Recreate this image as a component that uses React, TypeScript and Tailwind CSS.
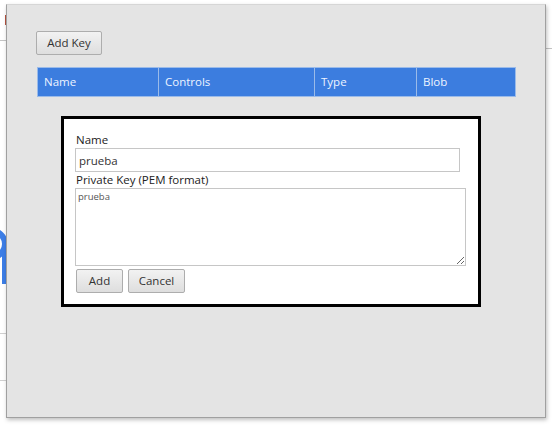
import React from "react";

const font = { fontFamily: '"Open Sans", "Noto Sans", Arial, sans-serif' };

function GreyButton({ label, className = "" }: { label: string; className?: string }) {
  return (
    <button
      type="button"
      className={`flex items-center justify-center border border-[#adadad] rounded-[2px] bg-gradient-to-b from-[#f2f2f2] to-[#dedede] text-[11.5px] text-[#333] leading-none ${className}`}
    >
      {label}
    </button>
  );
}

const columns = [
  { name: "Name", width: "w-[121px]" },
  { name: "Controls", width: "w-[156px]" },
  { name: "Type", width: "w-[102px]" },
  { name: "Blob", width: "flex-1" },
];

export default function App() {
  return (
    <div className="relative w-[552px] h-[426px] overflow-hidden bg-white" style={font}>
      {/* page behind the overlay */}
      <div className="absolute left-0 top-[40px] w-[7px] h-px bg-[#c4c4c4]" />
      <div className="absolute left-0 top-[333px] w-[7px] h-px bg-[#d0d0d0]" />
      <div className="absolute left-0 top-[380px] w-[7px] h-px bg-[#d0d0d0]" />
      <div className="absolute right-0 top-[48px] w-[8px] h-px bg-[#c4c4c4]" />
      <div className="absolute left-[5px] top-[15px] w-[2px] h-[10px] bg-[#b5523f]" />
      <svg className="absolute left-0 top-[226px]" width="8" height="60" viewBox="0 0 8 60">
        <circle cx="-8" cy="18" r="13" fill="none" stroke="#3d7ee6" strokeWidth="6" />
        <rect x="2" y="18" width="6" height="40" fill="#3d7ee6" />
      </svg>

      {/* overlay panel */}
      <div className="absolute left-[6px] top-[4px] w-[540px] h-[414px] bg-[#e4e4e4] border border-[#a0a0a0] border-t-[#d6d6d6] shadow-[1px_2px_4px_rgba(0,0,0,0.25)] pl-[29px] pt-[26px]">
        <GreyButton label="Add Key" className="w-[66px] h-[24px]" />

        <div className="mt-[12px] ml-px w-[479px] h-[30px] flex bg-[#3c7ddf] border border-[#9bbbe9]">
          {columns.map((c, i) => (
            <div
              key={c.name}
              className={`${c.width} h-full flex items-center pl-[6px] text-[11.5px] text-[#eef4ff] ${i < columns.length - 1 ? "border-r border-[#9bbbe9]" : ""}`}
            >
              {c.name}
            </div>
          ))}
        </div>

        <div className="mt-[19px] ml-[25px] w-[420px] h-[191px] border-[3px] border-black bg-white px-[11px] pt-[13px]">
          <div className="pl-px h-[16px] leading-[16px] text-[11.5px] text-[#222]">Name</div>
          <input
            readOnly
            value="prueba"
            className="block w-[385px] h-[24px] border border-[#c6c6c6] pl-[3px] text-[11.5px] text-[#333] outline-none"
            style={font}
          />
          <div className="pl-px h-[16px] leading-[15px] text-[11.5px] text-[#222]">Private Key (PEM format)</div>
          <textarea
            readOnly
            value="prueba"
            className="block w-[391px] h-[78px] border border-[#c6c6c6] pl-[2px] pt-px text-[9.5px] text-[#555] outline-none"
            style={font}
          />
          <div className="mt-[3px] ml-px flex gap-[5px]">
            <GreyButton label="Add" className="w-[47px] h-[24px]" />
            <GreyButton label="Cancel" className="w-[57px] h-[24px]" />
          </div>
        </div>
      </div>
    </div>
  );
}
